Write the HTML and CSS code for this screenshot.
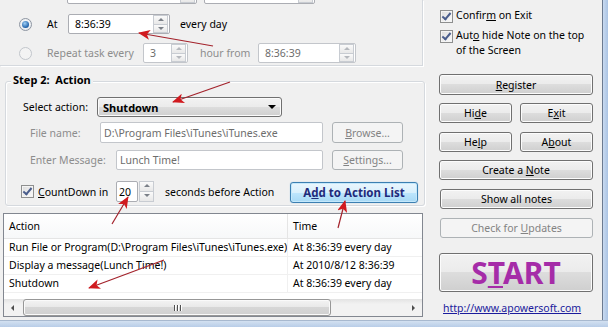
FILE: index.html
```html
<!DOCTYPE html>
<html>
<head>
<meta charset="utf-8">
<link rel="stylesheet" href="styles.css">
</head>
<body>
<div class="window">
  <div class="main">
    <div class="left">
      <div class="group1">
        <div class="row r0">
          <div class="box crop1"><span class="spin"><i class="up"></i><i class="dn"></i></span></div>
          <div class="box crop2"><span class="spin"><i class="up"></i><i class="dn"></i></span></div>
        </div>
        <div class="row r1">
          <span class="radio on"></span>
          <span class="lbl w-at">At</span>
          <div class="box t1"><span class="val">8:36:39</span><span class="spin"><i class="up"></i><i class="dn"></i></span></div>
          <span class="lbl ed">every day</span>
        </div>
        <div class="row r2 dis">
          <span class="radio off"></span>
          <span class="lbl w-rep">Repeat task every</span>
          <div class="box n3"><span class="val">3</span><span class="spin"><i class="up"></i><i class="dn"></i></span></div>
          <span class="lbl w-hf">hour from</span>
          <div class="box t2"><span class="val">8:36:39</span><span class="spin"><i class="up"></i><i class="dn"></i></span></div>
        </div>
      </div>

      <div class="group2">
        <div class="legend">Step 2:&nbsp; Action</div>
        <div class="row s1">
          <span class="lbl w-sel">Select action:</span>
          <div class="combo"><span>Shutdown</span><i class="caret"></i></div>
        </div>
        <div class="row s2 dis">
          <span class="lbl w-file">File name:</span>
          <div class="box fin"><span class="val">D:\Program Files\iTunes\iTunes.exe</span></div>
          <div class="btn disabled small"><span><u>B</u>rowse...</span></div>
        </div>
        <div class="row s3 dis">
          <span class="lbl w-msg">Enter Message:</span>
          <div class="box msg"><span class="val">Lunch Time!</span></div>
          <div class="btn disabled small"><span><u>S</u>ettings...</span></div>
        </div>
        <div class="row s4">
          <span class="check"></span>
          <span class="lbl w-cd"><u>C</u>ountDown in</span>
          <div class="box n20"><span class="val">20</span></div>
          <span class="spin solo"><i class="up"></i><i class="dn"></i></span>
          <span class="lbl w-sec">seconds before Action</span>
          <div class="btn addbtn"><span>A<u>d</u>d to Action List</span></div>
        </div>
      </div>

      <div class="list">
        <div class="lhead">
          <div class="c1">Action</div>
          <div class="c2">Time</div>
        </div>
        <div class="lrow"><div class="c1">Run File or Program(D:\Program Files\iTunes\iTunes.exe)</div><div class="c2">At 8:36:39 every day</div></div>
        <div class="lrow"><div class="c1">Display a message(Lunch Time!)</div><div class="c2">At 2010/8/12 8:36:39</div></div>
        <div class="lrow"><div class="c1">Shutdown</div><div class="c2">At 8:36:39 every day</div></div>
        <div class="lfill"></div>
        <div class="hscroll">
          <div class="sbtn"><i class="tl"></i></div>
          <div class="track"><div class="thumb"><span class="grip"><b></b><b></b><b></b></span></div></div>
          <div class="sbtn"><i class="tr"></i></div>
        </div>
      </div>
    </div>

    <div class="right">
      <div class="cbrow c-first"><span class="check"></span><span class="cbtext">Confir<u>m</u> on Exit</span></div>
      <div class="cbrow c-second"><span class="check"></span><span class="cbtext">Aut<u>o</u> hide Note on the top<br>of the Screen</span></div>
      <div class="btn wide reg"><span><u>R</u>egister</span></div>
      <div class="pair p1">
        <div class="btn half"><span>Hi<u>d</u>e</span></div>
        <div class="btn half"><span>E<u>x</u>it</span></div>
      </div>
      <div class="pair p2">
        <div class="btn half"><span>He<u>l</u>p</span></div>
        <div class="btn half"><span>A<u>b</u>out</span></div>
      </div>
      <div class="btn wide cn"><span>Create a <u>N</u>ote</span></div>
      <div class="btn wide san"><span>Show all notes</span></div>
      <div class="btn wide disabled cfu"><span>Check for <u>U</u>pdates</span></div>
      <div class="btn wide start"><span>S<u>T</u>ART</span></div>
      <a class="link">http://www.apowersoft.com</a>
    </div>

    <div class="frame-r"></div>
  </div>
  <div class="frame-b"></div>
</div>

<svg class="arrows" width="608" height="327" viewBox="0 0 608 327">
  <defs>
    <marker id="ah" markerUnits="userSpaceOnUse" markerWidth="12" markerHeight="10" refX="11" refY="5" orient="auto">
      <path d="M0,0 L12,5 L0,10 L3,5 z" fill="#d11a1f"/>
    </marker>
  </defs>
  <g stroke="#a3222b" stroke-width="1.2" fill="none" marker-end="url(#ah)">
    <line x1="213" y1="46" x2="139" y2="33"/>
    <line x1="230" y1="82" x2="173" y2="102"/>
    <line x1="112" y1="224" x2="128" y2="197"/>
    <line x1="338" y1="228" x2="345" y2="201"/>
    <line x1="164" y1="260" x2="89" y2="288"/>
  </g>
</svg>
</body>
</html>
```

FILE: styles.css
```css
* { box-sizing: border-box; margin: 0; padding: 0; }
html, body { width: 608px; height: 327px; overflow: hidden; }
body {
  background: #f0f0f0;
  font-family: "Noto Sans", "Open Sans", sans-serif;
  font-size: 10.5px;
  color: #000;
  position: relative;
}
u { text-decoration: underline; text-underline-offset: 1px; }

.window { display: flex; flex-direction: column; height: 327px; }
.main { display: flex; height: 320px; }
.left { width: 428px; display: flex; flex-direction: column; }
.right { width: 174px; display: flex; flex-direction: column; }
.frame-r {
  width: 6px;
  border-left: 1px solid #6b7a90;
  background: linear-gradient(90deg, #c9daf0, #aac3e3);
}
.frame-b {
  height: 7px;
  border-top: 1px solid #a8b9cf;
  background: linear-gradient(#d3e1f1, #b8cde8);
}

.row { display: flex; align-items: center; white-space: nowrap; }
.lbl { display: inline-block; white-space: nowrap; }
.dis .lbl { color: #8d8d8d; }
.dis .val { color: #6d6d6d; }

/* generic text box */
.box {
  height: 20px;
  border: 1px solid #abadb3;
  border-radius: 2px;
  background: #fff;
  display: flex;
  align-items: center;
  padding-left: 6px;
  overflow: hidden;
}
.dis .box { border-color: #c3c6cb; }
.val { white-space: nowrap; }

.spin {
  margin-left: auto;
  margin-right: 1px;
  width: 15px;
  height: 18px;
  display: flex;
  flex-direction: column;
}
.spin i {
  flex: 1;
  border: 1px solid #c8ccd2;
  background: linear-gradient(#fafafa, #e8e8e8);
  position: relative;
}
.spin i + i { border-top: none; }
.spin i::after {
  content: "";
  position: absolute;
  left: 4px;
  top: 2px;
  border-left: 3px solid transparent;
  border-right: 3px solid transparent;
}
.spin .up::after { border-bottom: 3px solid #7b8088; }
.spin .dn::after { border-top: 3px solid #7b8088; top: 2px; }
.dis .spin .up::after { border-bottom-color: #b5b8bd; }
.dis .spin .dn::after { border-top-color: #b5b8bd; }
.spin.solo { margin-left: 1px; margin-right: 0; height: 21px; width: 15px; }

/* step 1 group */
.group1 {
  width: 423px;
  border-right: 1px solid #d5d9de;
  border-bottom: 1px solid #d5d9de;
  box-shadow: 1px 1px 0 #fff;
  padding-bottom: 2px;
}
.r0 { margin-top: -16px; height: 20px; }
.crop1 { margin-left: 67px; width: 130px; }
.crop2 { margin-left: 7px; width: 111px; }
.r1 { margin-top: 10px; height: 20px; }
.r2 { margin-top: 9px; height: 20px; }

.radio {
  width: 13px; height: 13px; border-radius: 50%;
  margin-left: 19px;
  border: 1px solid #8e96a2;
  background: radial-gradient(circle at 50% 40%, #fff, #dfe3e8);
  display: inline-flex; align-items: center; justify-content: center;
}
.radio.on::after {
  content: ""; width: 7px; height: 7px; border-radius: 50%;
  background: radial-gradient(circle at 40% 35%, #9fd0f6, #1d5fa8 70%, #12407a);
}
.radio.off { border-color: #c2c6cc; background: #f3f3f3; }
.w-at { margin-left: 15px; width: 21px; }
.t1 { width: 102px; }
.ed { margin-left: 10px; }
.w-rep { margin-left: 15px; width: 96px; }
.n3 { width: 45px; }
.w-hf { margin-left: 12px; width: 58px; }
.t2 { width: 98px; }

/* step 2 group */
.group2 {
  margin-top: 15px;
  margin-left: 5px;
  width: 420px;
  height: 125px;
  border: 1px solid #d5d9de;
  border-radius: 3px;
  box-shadow: inset 1px 1px 0 #fff, 1px 1px 0 #fff;
}
.legend {
  margin-top: -10px;
  margin-left: 5px;
  height: 16px;
  line-height: 16px;
  width: max-content;
  padding: 0 2px;
  background: #f0f0f0;
  font-weight: bold;
  font-size: 11px;
}
.s1 { margin-top: 9px; height: 20px; }
.w-sel { margin-left: 17px; width: 74px; }
.combo {
  width: 185px; height: 20px;
  border: 1px solid #707070; border-radius: 3px;
  background: linear-gradient(#f2f2f2, #ebebeb 50%, #dddddd 50%, #cfcfcf);
  box-shadow: inset 0 0 0 1px #fbfbfb;
  display: flex; align-items: center;
  padding-left: 5px; padding-right: 5px;
  font-weight: bold;
  font-size: 11px;
}
.caret {
  margin-left: auto;
  border-left: 4px solid transparent;
  border-right: 4px solid transparent;
  border-top: 4px solid #000;
}
.s2 { margin-top: 5px; height: 21px; }
.w-file { margin-left: 24px; width: 70px; }
.fin { width: 223px; height: 21px; padding-left: 3px; }
.s3 { margin-top: 7px; height: 20px; }
.w-msg { margin-left: 24px; width: 86px; }
.msg { width: 207px; padding-left: 3px; }
.small { margin-left: 9px; width: 71px; height: 21px; }
.s3 .small { height: 20px; }

.s4 { margin-top: 11px; height: 21px; }
.check {
  width: 13px; height: 13px;
  border: 1px solid #8e8f8f;
  background: linear-gradient(135deg, #dcdcdc, #fbfbfb);
  box-shadow: inset 0 0 0 1px #f4f4f4;
  display: inline-flex; align-items: center; justify-content: center;
  flex: none;
}
.check::after {
  content: "";
  width: 3px; height: 7px;
  border-right: 2px solid #4a5d8c;
  border-bottom: 2px solid #4a5d8c;
  transform: translateY(-1px) rotate(40deg);
}
.s4 .check { margin-left: 15px; }
.w-cd { margin-left: 4px; width: 78px; }
.n20 { width: 22px; height: 21px; padding-left: 2px; }
.w-sec { margin-left: 11px; width: 125px; }

/* buttons */
.btn {
  height: 21px;
  border: 1px solid #707070;
  border-radius: 3px;
  background: linear-gradient(#f2f2f2, #ebebeb 50%, #dddddd 50%, #cfcfcf);
  box-shadow: inset 0 0 0 1px #fcfcfc;
  display: flex; align-items: center; justify-content: center;
  white-space: nowrap;
  flex: none;
}
.btn.disabled {
  border-color: #adb2b5;
  background: #f4f4f4;
  box-shadow: none;
  color: #838383;
}
.addbtn {
  width: 128px; height: 21px;
  margin-top: 1px;
  border-color: #3c7fb1;
  background: linear-gradient(#eaf6fd, #d9f0fc 50%, #bee6fd 50%, #a7d9f5);
  box-shadow: inset 0 0 0 1px #c4e8fb, 0 0 1px #7ab8e0;
  color: #1f2a7a;
  font-weight: bold;
  font-size: 11.5px;
}

/* list view */
.list {
  margin-top: 7px;
  margin-left: 3px;
  width: 420px;
  height: 104px;
  border: 1px solid #828790;
  background: #fff;
  display: flex; flex-direction: column;
}
.lhead {
  height: 25px;
  display: flex;
  border-bottom: 1px solid #e5e5e5;
  background: linear-gradient(#fff, #f7f8f9);
}
.lhead .c1, .lhead .c2 { display: flex; align-items: center; }
.c1 { width: 284px; padding-left: 5px; border-right: 1px solid #e5e5e5; white-space: nowrap; overflow: hidden; }
.c2 { flex: 1; padding-left: 5px; white-space: nowrap; overflow: hidden; }
.lrow { height: 18px; display: flex; align-items: center; border-bottom: 1px solid #f0f0f0; }
.lrow .c1, .lrow .c2 { height: 17px; line-height: 17px; }
.lrow .c1 { border-right-color: #f0f0f0; }
.lfill { flex: 1; }
.hscroll {
  height: 17px;
  display: flex;
  background: linear-gradient(#e3e3e3, #f2f2f2 30%, #f2f2f2);
}
.sbtn { width: 17px; display: flex; align-items: center; justify-content: center; }
.sbtn i { width: 0; height: 0; border-top: 3px solid transparent; border-bottom: 3px solid transparent; }
.sbtn .tl { border-right: 3px solid #4d4d4d; }
.sbtn .tr { border-left: 3px solid #4d4d4d; }
.track { flex: 1; padding: 0 1px; display: flex; }
.thumb {
  width: 308px;
  margin-left: 1px;
  border: 1px solid #979797;
  border-radius: 3px;
  background: linear-gradient(#f3f3f3, #e8e8e8 50%, #d6d6d6 50%, #d0d0d0);
  box-shadow: inset 0 0 0 1px #fafafa;
  display: flex; align-items: center; justify-content: center;
}
.grip { display: flex; gap: 2px; }
.grip b { width: 1px; height: 6px; background: #4f4f4f; box-shadow: 1px 0 0 #fff; }

/* right panel */
.cbrow { display: flex; align-items: flex-start; margin-left: 12px; }
.cbtext { margin-left: 3px; line-height: 15px; margin-top: -2px; }
.c-first { margin-top: 10px; }
.c-second { margin-top: 7px; }
.wide { width: 154px; margin-left: 11px; }
.reg { margin-top: 16px; }
.pair { display: flex; gap: 8px; margin-left: 11px; margin-top: 8px; }
.half { width: 73px; height: 20px; }
.p2 { margin-top: 9px; }
.cn { margin-top: 8px; height: 20px; }
.san { margin-top: 9px; height: 20px; margin-left: 12px; width: 153px; }
.cfu { margin-top: 9px; height: 20px; margin-left: 12px; width: 153px; }
.start {
  margin-top: 15px;
  height: 39px;
  font-size: 30px;
  font-weight: bold;
  color: #a52ca8;
}
.start u { text-decoration-thickness: 2px; text-underline-offset: 2px; }
.link {
  margin-top: 9px;
  margin-left: 15px;
  color: #1b1b9c;
  text-decoration: underline;
  white-space: nowrap;
}

.arrows { position: absolute; left: 0; top: 0; pointer-events: none; }
```
